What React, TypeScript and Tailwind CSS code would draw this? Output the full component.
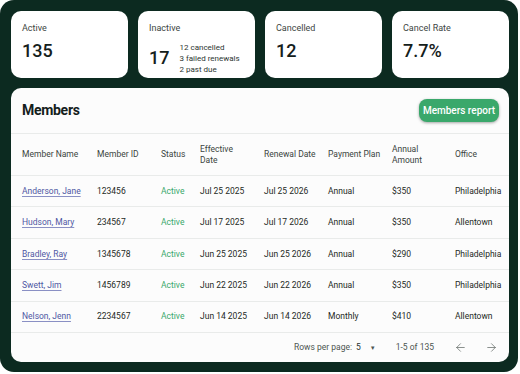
import { ArrowLeft, ArrowRight } from "lucide-react";

const stats = [
  { label: "Active", value: "135" },
  { label: "Inactive", value: "17", notes: ["12 cancelled", "3 failed renewals", "2 past due"] },
  { label: "Cancelled", value: "12" },
  { label: "Cancel Rate", value: "7.7%" },
];

const members = [
  { name: "Anderson, Jane", id: "123456", eff: "Jul 25 2025", renew: "Jul 25 2026", plan: "Annual", amount: "$350", office: "Philadelphia" },
  { name: "Hudson, Mary", id: "234567", eff: "Jul 17 2025", renew: "Jul 17 2026", plan: "Annual", amount: "$350", office: "Allentown" },
  { name: "Bradley, Ray", id: "1345678", eff: "Jun 25 2025", renew: "Jun 25 2026", plan: "Annual", amount: "$290", office: "Philadelphia" },
  { name: "Swett, Jim", id: "1456789", eff: "Jun 22 2025", renew: "Jun 22 2026", plan: "Annual", amount: "$350", office: "Philadelphia" },
  { name: "Nelson, Jenn", id: "2234567", eff: "Jun 14 2025", renew: "Jun 14 2026", plan: "Monthly", amount: "$410", office: "Allentown" },
];

const cols = "grid grid-cols-[75px_64px_39px_64px_64px_64px_63px_1fr] px-[11px] items-center whitespace-nowrap";

export default function App() {
  return (
    <div className="w-[520px] h-[374px] bg-white" style={{ fontFamily: "Roboto, 'Noto Sans', sans-serif" }}>
      <div className="w-[518px] h-[372px] bg-[#0c2a20] rounded-[14px] pt-[11px] pl-[11px] pr-[9px] pb-[10px] flex flex-col gap-[10px]">
        <div className="grid grid-cols-4 gap-[10px]">
          {stats.map((s) => (
            <div key={s.label} className="bg-white rounded-[10px] h-[67px] px-[11px] pt-[11px]">
              <p className="text-[9px] leading-[13px] text-[#3d4642]">{s.label}</p>
              <div className="flex items-center mt-[5px] gap-[10px]">
                <span className="text-[18px] leading-[22px] font-medium text-[#14201b]">{s.value}</span>
                {s.notes && (
                  <div className="text-[8px] leading-[10.8px] text-[#2c3531] mt-[3px] whitespace-nowrap">
                    {s.notes.map((n) => (
                      <p key={n}>{n}</p>
                    ))}
                  </div>
                )}
              </div>
            </div>
          ))}
        </div>

        <div className="flex-1 bg-[#fcfcfc] rounded-[10px] flex flex-col overflow-hidden">
          <div className="h-[46px] shrink-0 flex items-center justify-between pl-[11px] pr-[10px] border-b border-[#e9ebea]">
            <h2 className="text-[14px] font-bold tracking-[-0.3px] text-[#14201b]">Members</h2>
            <button className="h-[23px] w-[80px] rounded-[8px] bg-[#3aa86b] text-white text-[10px] font-medium shadow-[0_1px_3px_rgba(0,0,0,0.35)]">
              Members report
            </button>
          </div>

          <div className={`${cols} h-[42px] shrink-0 border-b border-[#e9ebea] text-[8.5px] leading-[11px] text-[#3b4440]`}>
            <span>Member Name</span>
            <span>Member ID</span>
            <span>Status</span>
            <span>Effective<br />Date</span>
            <span>Renewal Date</span>
            <span>Payment Plan</span>
            <span>Annual<br />Amount</span>
            <span>Office</span>
          </div>

          {members.map((m) => (
            <div key={m.id} className={`${cols} h-[31.4px] shrink-0 border-b border-[#e9ebea] text-[8.5px] text-[#1e2a25]`}>
              <span className="text-[#4f57a3] underline underline-offset-[2px] decoration-[#8a90c4]">{m.name}</span>
              <span>{m.id}</span>
              <span className="text-[#3aa86b]">Active</span>
              <span>{m.eff}</span>
              <span>{m.renew}</span>
              <span>{m.plan}</span>
              <span>{m.amount}</span>
              <span>{m.office}</span>
            </div>
          ))}

          <div className="flex-1 flex items-center text-[8.5px] text-[#4c5551] pl-[283px] whitespace-nowrap">
            <span>Rows per page:</span>
            <span className="ml-[4px] text-[#26302c]">5</span>
            <span className="ml-[9px] text-[6px] text-[#4c5551]">▼</span>
            <span className="ml-[20px]">1-5 of 135</span>
            <ArrowLeft className="ml-[20px] text-[#5b6460]" size={13} strokeWidth={1.3} />
            <ArrowRight className="ml-[18px] text-[#5b6460]" size={13} strokeWidth={1.3} />
          </div>
        </div>
      </div>
    </div>
  );
}
